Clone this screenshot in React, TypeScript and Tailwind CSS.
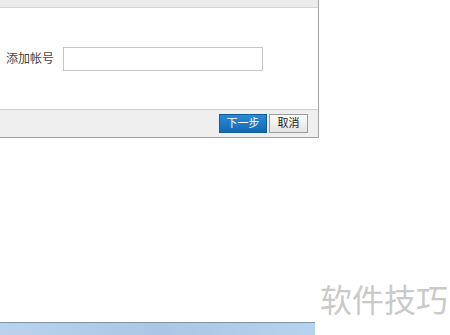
export default function App() {
  return (
    <div
      className="w-[450px] h-[335px] overflow-hidden bg-white flex flex-col"
      style={{ fontFamily: '"Liberation Sans", "Noto Sans CJK SC", sans-serif' }}
    >
      <div className="w-[319px] border-r border-b border-[#a3a3a3] flex flex-col">
        <div className="h-[8px] bg-[#ececec] border-b border-[#d4d4d4]" />
        <div className="h-[101px] bg-white flex items-center pl-[6px] gap-[9px]">
          <span className="text-[12px] text-[#444] leading-none">添加帐号</span>
          <div className="w-[200px] h-[24px] border border-[#c6c6c6] bg-white" />
        </div>
        <div className="h-[28px] bg-[#efefef] border-t border-[#d0d0d0] flex items-center justify-end pr-[10px] gap-[2px]">
          <button className="w-[48px] h-[19px] bg-gradient-to-b from-[#2a8ad6] to-[#1269b4] border border-[#0f5c9c] text-white text-[11px] leading-none">
            下一步
          </button>
          <button className="w-[39px] h-[19px] bg-gradient-to-b from-[#fbfbfb] to-[#e4e4e4] border border-[#9a9a9a] text-[#222] text-[11px] leading-none">
            取消
          </button>
        </div>
      </div>
      <div className="h-[184px] flex flex-col justify-end items-end pr-[2px] pb-[5px]">
        <span className="text-[32px] leading-none text-[#cacaca]">软件技巧</span>
      </div>
      <div className="w-[315px] h-[13px] border-t border-[#7f95a8] bg-gradient-to-r from-[#b9d3ee] via-[#a9c6e6] to-[#b7d2ee]" />
    </div>
  );
}
